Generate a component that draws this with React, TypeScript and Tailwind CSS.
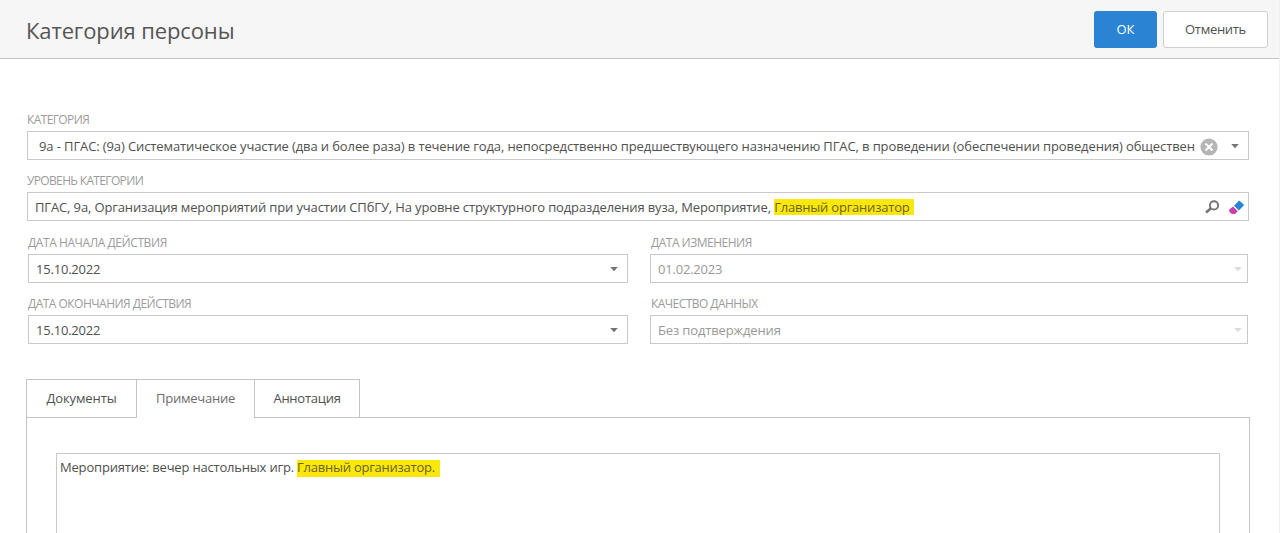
import type { ReactNode } from "react";

function Arrow({ muted = false }: { muted?: boolean }) {
  return (
    <svg width="8" height="5" viewBox="0 0 8 5" className={muted ? "shrink-0 fill-[#dcdcdc]" : "shrink-0 fill-[#747474]"}>
      <path d="M.2 0h7.6L4 4.2z" />
    </svg>
  );
}

function Label({ children, className }: { children: ReactNode; className: string }) {
  return (
    <div className={`h-[22px] text-[12px] leading-[22px] whitespace-nowrap text-[#9c9c9c] ${className}`}>
      <span>{children}</span>
    </div>
  );
}

function DateField({ label, value, muted = false, labelClass, valueClass }: { label: string; value: string; muted?: boolean; labelClass: string; valueClass: string }) {
  return (
    <div>
      <Label className={labelClass}>{label}</Label>
      <div className={`flex h-[29px] items-center justify-between border border-[#c9c9c9] bg-white text-[13px] ${muted ? "pr-[5px] pl-[7px] text-[#999999]" : "pr-[9px] pl-[7px] text-[#505050]"}`}>
        <span className={`pt-[2px] ${valueClass}`}>{value}</span>
        <span className="flex pt-[2px]"><Arrow muted={muted} /></span>
      </div>
    </div>
  );
}

export default function App() {
  return (
    <div className="flex h-[533px] w-[1280px] flex-col overflow-hidden border-r border-[#f0f0f0] bg-white font-['Open_Sans','Noto_Sans',sans-serif] text-[13px] text-[#505050]">
      <header className="flex h-[59px] shrink-0 items-center justify-between border-b border-[#c4c4c4] bg-[#f6f6f6] pr-[11px] pl-[26px]">
        <h1 className="pt-px text-[22px] leading-[28px] tracking-[-0.12px] text-[#555555]">Категория персоны</h1>
        <div className="flex gap-[6px]">
          <button className="h-[37px] w-[63px] rounded-[3px] bg-[#2b84d3] pt-px text-[13px] text-white">ОК</button>
          <button className="h-[37px] w-[105px] rounded-[3px] border border-[#cfcfcf] bg-white pt-px text-[13px] tracking-[-0.3px]">Отменить</button>
        </div>
      </header>

      <main className="flex flex-col pt-[50px] pr-[29px] pl-[26px]">
        <section className="pl-px">
          <Label className="tracking-[-0.62px]">КАТЕГОРИЯ</Label>
          <div className="flex h-[29px] w-[1222px] items-center border border-[#c9c9c9] pr-[9px] pl-[11px] whitespace-nowrap">
            <span className="w-[1157px] pt-[2px] tracking-[-0.112px]">9а - ПГАС: (9а) Систематическое участие (два и более раза) в течение года, непосредственно предшествующего назначению ПГАС, в проведении (обеспечении проведения) обществен</span>
            <svg width="18" height="18" viewBox="0 0 18 18" className="mt-[2px] ml-[4px] shrink-0">
              <circle cx="9" cy="9" r="8.6" fill="#b5b5b5" />
              <path d="M5.5 5.5l7 7M12.5 5.5l-7 7" stroke="white" strokeWidth="2" />
            </svg>
            <span className="ml-auto flex pt-px"><Arrow /></span>
          </div>
          <div className="h-[10px]" />
          <Label className="tracking-[-0.65px]">УРОВЕНЬ КАТЕГОРИИ</Label>
          <div className="flex h-[29px] w-[1222px] items-center justify-between border border-[#c9c9c9] pr-[3px] pl-[7px] whitespace-nowrap">
            <span className="pt-[3px] tracking-[-0.13px]">ПГАС, 9а, Организация мероприятий при участии СПбГУ, На уровне структурного подразделения вуза, Мероприятие, <mark className="inline-block h-[16px] bg-[#fbe70a] pr-[4px] leading-[16px] tracking-[-0.2px] text-[#6a6320]">Главный организатор</mark></span>
            <span className="flex items-center gap-[9px] pt-px">
              <svg width="15" height="15" viewBox="0 0 15 15" fill="none" stroke="#747474">
                <circle cx="10" cy="5.4" r="4.1" strokeWidth="1.9" />
                <path d="M7 8.3L2 12.5" strokeWidth="2.6" />
              </svg>
              <svg width="17" height="15" viewBox="0 0 17 15">
                <path d="M6 5.8L11.2 .4L16.2 5L10.9 10.5Z" fill="#2b84d3" />
                <path d="M5.1 6.6L9.8 11.2L7.6 13.4Q6.8 14.1 5.4 14H3.8L1.2 11.8V9.6Z" fill="#c941aa" />
              </svg>
            </span>
          </div>
        </section>

        <section className="mt-[11px] grid w-[1222px] grid-cols-[600px_598px] gap-x-[22px] gap-y-[10px] pl-[2px]">
          <DateField label="ДАТА НАЧАЛА ДЕЙСТВИЯ" value="15.10.2022" labelClass="tracking-[-0.42px]" valueClass="tracking-[-0.2px]" />
          <DateField label="ДАТА ИЗМЕНЕНИЯ" value="01.02.2023" muted labelClass="pl-px tracking-[-0.5px]" valueClass="tracking-[-0.2px]" />
          <DateField label="ДАТА ОКОНЧАНИЯ ДЕЙСТВИЯ" value="15.10.2022" labelClass="tracking-[-0.52px]" valueClass="tracking-[-0.2px]" />
          <DateField label="КАЧЕСТВО ДАННЫХ" value="Без подтверждения" muted labelClass="pl-px tracking-[-0.55px]" valueClass="tracking-[-0.14px]" />
        </section>

        <nav className="z-10 mt-[35px] flex h-[39px] w-[334px] text-[13px]">
          <button className="w-[110px] border border-r-0 border-[#c4c4c4] bg-white tracking-[-0.1px]">Документы</button>
          <button className="w-[118px] border-t border-l border-[#c4c4c4] bg-white tracking-[-0.25px] text-[#6c6c6c]">Примечание</button>
          <button className="w-[106px] border border-[#c4c4c4] bg-white tracking-[-0.25px]">Аннотация</button>
        </nav>
        <section className="-mt-px h-[140px] w-[1224px] border border-[#c4c4c4] px-[29px] pt-[35px]">
          <div className="h-[120px] border border-[#c9c9c9] pt-[3px] pl-[3px] leading-[20px] tracking-[-0.19px] whitespace-nowrap">
            Мероприятие: вечер настольных игр. <mark className="relative top-[3px] inline-block h-[17px] bg-[#fbe70a] pr-[5px] align-top leading-[14px] tracking-[-0.24px] text-[#6a6320]">Главный организатор.</mark>
          </div>
        </section>
      </main>
    </div>
  );
}
